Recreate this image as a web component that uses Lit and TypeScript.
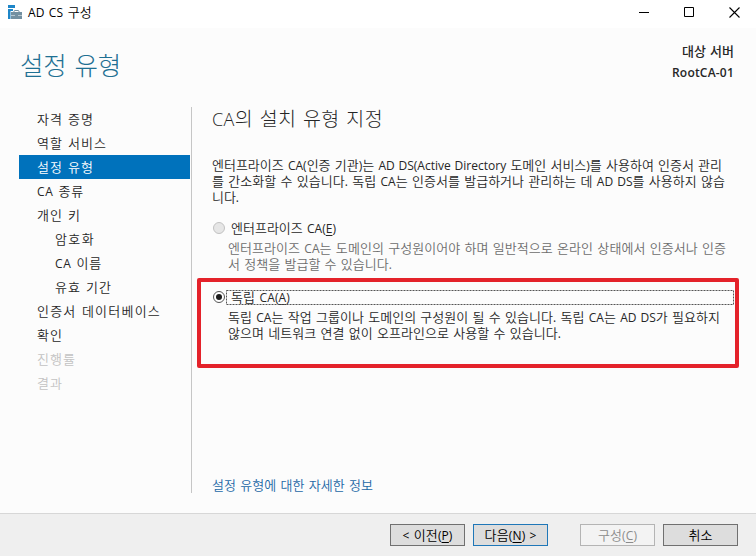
import { LitElement, html, css, svg, nothing } from "lit";
import { customElement, property } from "lit/decorators.js";
import { classMap } from "lit/directives/class-map.js";

/** One line of text, tracked so that it fills a given width. "_X" marks an access key. */
@customElement("text-line")
export class TextLine extends LitElement {
  @property() text = "";
  @property({ type: Number }) width = 0;

  static styles = css`
    :host { display: block; white-space: pre; }
    .run { display: inline-block; vertical-align: top; white-space: pre; word-spacing: 0.1em; }
    .latin { font-family: "Open Sans", "Noto Sans", sans-serif; font-size: 0.925em; line-height: 0; word-spacing: 0.06em; font-weight: var(--latin-weight, 400); }
    .key { text-decoration: underline; text-underline-offset: 2px; text-decoration-thickness: 1px; }
  `;

  render() {
    const parts = this.text.match(/_[A-Z]|[!-^`-~]+(?: (?=[!-~]))?|[^!-~]+/g) ?? [];
    return html`<span class="run">${parts.map((p) =>
      p.startsWith("_")
        ? html`<span class="latin key">${p.slice(1)}</span>`
        : /^[!-~]/.test(p)
          ? html`<span class="latin">${p}</span>`
          : p)}</span>`;
  }

  updated() {
    const run = this.renderRoot.querySelector<HTMLElement>(".run");
    if (!run || !this.width) return;
    run.style.letterSpacing = "0px";
    const count = this.text.replace(/_/g, "").length;
    run.style.letterSpacing = `${(this.width - run.getBoundingClientRect().width) / count}px`;
  }
}

interface Step { label: string; width: number; sub?: boolean; state?: "current" | "disabled"; }

const steps: Step[] = [
  { label: "자격 증명", width: 57 },
  { label: "역할 서비스", width: 70 },
  { label: "설정 유형", width: 57, state: "current" },
  { label: "CA 종류", width: 47 },
  { label: "개인 키", width: 44 },
  { label: "암호화", width: 40, sub: true },
  { label: "CA 이름", width: 47, sub: true },
  { label: "유효 기간", width: 57, sub: true },
  { label: "인증서 데이터베이스", width: 124 },
  { label: "확인", width: 26 },
  { label: "진행률", width: 39, state: "disabled" },
  { label: "결과", width: 26, state: "disabled" },
];

const intro: [string, number][] = [
  ["엔터프라이즈 CA(인증 기관)는 AD DS(Active Directory 도메인 서비스)를 사용하여 인증서 관리", 510],
  ["를 간소화할 수 있습니다. 독립 CA는 인증서를 발급하거나 관리하는 데 AD DS를 사용하지 않습", 513],
  ["니다.", 27],
];
const enterprise: [string, number][] = [
  ["엔터프라이즈 CA는 도메인의 구성원이어야 하며 일반적으로 온라인 상태에서 인증서나 인증", 498],
  ["서 정책을 발급할 수 있습니다.", 164],
];
const standalone: [string, number][] = [
  ["독립 CA는 작업 그룹이나 도메인의 구성원이 될 수 있습니다. 독립 CA는 AD DS가 필요하지", 492],
  ["않으며 네트워크 연결 없이 오프라인으로 사용할 수 있습니다.", 333],
];

const lines = (rows: [string, number][]) =>
  rows.map(([text, width]) => html`<text-line .text=${text} .width=${width}></text-line>`);

@customElement("app-root")
export class AppRoot extends LitElement {
  static styles = css`
    :host {
      display: flex; flex-direction: column; position: relative;
      width: 756px; height: 556px; overflow: hidden;
      background: #fcfcfc; color: #262626;
      font: 350 13px/16px "Noto Sans CJK KR", "Open Sans", sans-serif;
    }
    * { box-sizing: border-box; }
    .titlebar { display: flex; align-items: center; height: 28px; flex: none; background: #fff; color: #000; padding: 0 16px 4px 7px; }
    .caption { margin-left: 5px; flex: 1; }
    .controls { display: flex; gap: 35px; }
    .controls svg:last-child { margin-left: -1px; }
    svg { display: block; }
    .header { display: flex; justify-content: space-between; height: 79px; flex: none; padding: 0 22px 0 20px; }
    .title { font-size: 25.5px; line-height: 36px; font-weight: 300; color: #1f7093; margin-top: 18px; }
    .server { display: flex; flex-direction: column; align-items: flex-end; gap: 5px; padding-top: 15px; font-weight: 500; --latin-weight: 600; }
    .body { display: flex; height: 406px; flex: none; }
    .nav { width: 192px; height: 386px; padding: 0 1px 0 19px; border-right: 1px solid #c6c6c6; }
    .step { height: 24px; line-height: 24px; padding-left: 18px; }
    .sub { padding-left: 36px; }
    .current { background: #0072bc; color: #fff; }
    .disabled { color: #c3c3c3; }
    .main { width: 564px; padding: 0 20px; display: flex; flex-direction: column; }
    .heading { font-size: 19.5px; line-height: 22px; height: 24px; font-weight: 300; --latin-weight: 300; }
    .intro { margin-top: 26px; }
    .option { display: grid; grid-template-columns: 14px 508px; height: 16px; align-items: center; }
    .first { margin-top: 15px; }
    .second { margin-top: 17px; }
    .label { height: 15px; line-height: 13px; padding-left: 5px; }
    .focused { position: relative; }
    .focus { position: absolute; inset: 0; width: 508px; height: 15px; }
    .detail { padding-left: 16px; margin-top: 4px; }
    .muted { color: #6d6d6d; }
    .radio { width: 12px; height: 12px; border-radius: 50%; border: 1px solid #555; background: #fff; margin-left: 1px; display: grid; place-items: center; }
    .radio.off { border-color: #c2c2c2; background: #e6e6e6; }
    .dot { width: 6px; height: 6px; border-radius: 50%; background: #1c1c1c; }
    .link { color: #1c68a6; margin-top: 136px; }
    .footer { flex: 1; display: flex; justify-content: flex-end; gap: 8px; padding: 10px 18px 0 0; background: #efefef; border-top: 1px solid #d7d7d7; }
    .button { width: 75px; height: 22px; border: 1px solid #707070; background: #ddd; color: #000; display: flex; justify-content: center; line-height: 20px; }
    .primary { border-color: #1f77b8; }
    .inactive { border-color: #b4b4b4; background: #f3f3f3; color: #8b8b8b; margin-left: 24px; }
    .callout { position: absolute; left: 197px; top: 278px; width: 542px; height: 90px; border: 4px solid #e4222a; border-radius: 2px; pointer-events: none; }
  `;

  render() {
    return html`
      <div class="titlebar">
        <svg width="16" height="16" viewBox="0 0 16 16">
          <path fill="#1e86c8" d="M1 1h7v3H1zM1 5h5v2H3.500V15H1z"/>
          <path fill="#7390a1" d="M4 8h11v3H4zM4 11.500h11V15H4z"/>
          <path fill="#7390a1" d="M8 10.500h3v2H8z"/>
          <path fill="none" stroke="#7390a1" d="M6.500 8.500l1-2h4l1 2"/>
        </svg>
        <text-line class="caption" .text=${"AD CS 구성"} .width=${64}></text-line>
        <div class="controls">
          <svg width="10" height="11" viewBox="0 0 10 11"><path stroke="#000" d="M0 5.5h10"/></svg>
          <svg width="11" height="11" viewBox="0 0 11 11"><path fill="none" stroke="#000" d="M.5 .5h9v9h-9z"/></svg>
          <svg width="11" height="11" viewBox="0 0 11 11"><path stroke="#000" stroke-width="1.1" d="M.5 .5l10 10M10.5 .5l-10 10"/></svg>
        </div>
      </div>
      <div class="header">
        <text-line class="title" .text=${"설정 유형"} .width=${101}></text-line>
        <div class="server">
          <text-line .text=${"대상 서버"} .width=${52}></text-line>
          <text-line .text=${"RootCA-01"} .width=${62}></text-line>
        </div>
      </div>
      <div class="body">
        <div class="nav">
          ${steps.map((s) => html`<text-line
            class=${classMap({ step: true, sub: !!s.sub, current: s.state === "current", disabled: s.state === "disabled" })}
            .text=${s.label} .width=${s.width}></text-line>`)}
        </div>
        <div class="main">
          <text-line class="heading" .text=${"CA의 설치 유형 지정"} .width=${171}></text-line>
          <div class="intro">${lines(intro)}</div>
          ${this.option("엔터프라이즈 CA(_E)", 105, false)}
          <div class="detail muted">${lines(enterprise)}</div>
          ${this.option("독립 CA(_A)", 59, true)}
          <div class="detail">${lines(standalone)}</div>
          <text-line class="link" .text=${"설정 유형에 대한 자세한 정보"} .width=${161}></text-line>
        </div>
      </div>
      <div class="footer">
        ${this.button("< 이전(_P)", 50)}
        ${this.button("다음(_N) >", 52, "primary")}
        ${this.button("구성(_C)", 39, "inactive")}
        ${this.button("취소", 24)}
      </div>
      <div class="callout"></div>`;
  }

  private option(label: string, width: number, checked: boolean) {
    return html`<div class="option ${checked ? "second" : "first"}">
      <div class=${classMap({ radio: true, off: !checked })}>${checked ? html`<div class="dot"></div>` : nothing}</div>
      <div class=${classMap({ label: true, focused: checked })}>
        <text-line .text=${label} .width=${width}></text-line>
        ${checked
          ? html`<svg class="focus" viewBox="0 0 508 15">${svg`<rect x=".5" y=".5" width="507" height="14" fill="none" stroke="#555" stroke-dasharray="2 1"/>`}</svg>`
          : nothing}
      </div>
    </div>`;
  }

  private button(label: string, width: number, kind = "") {
    return html`<div class="button ${kind}"><text-line .text=${label} .width=${width}></text-line></div>`;
  }
}
